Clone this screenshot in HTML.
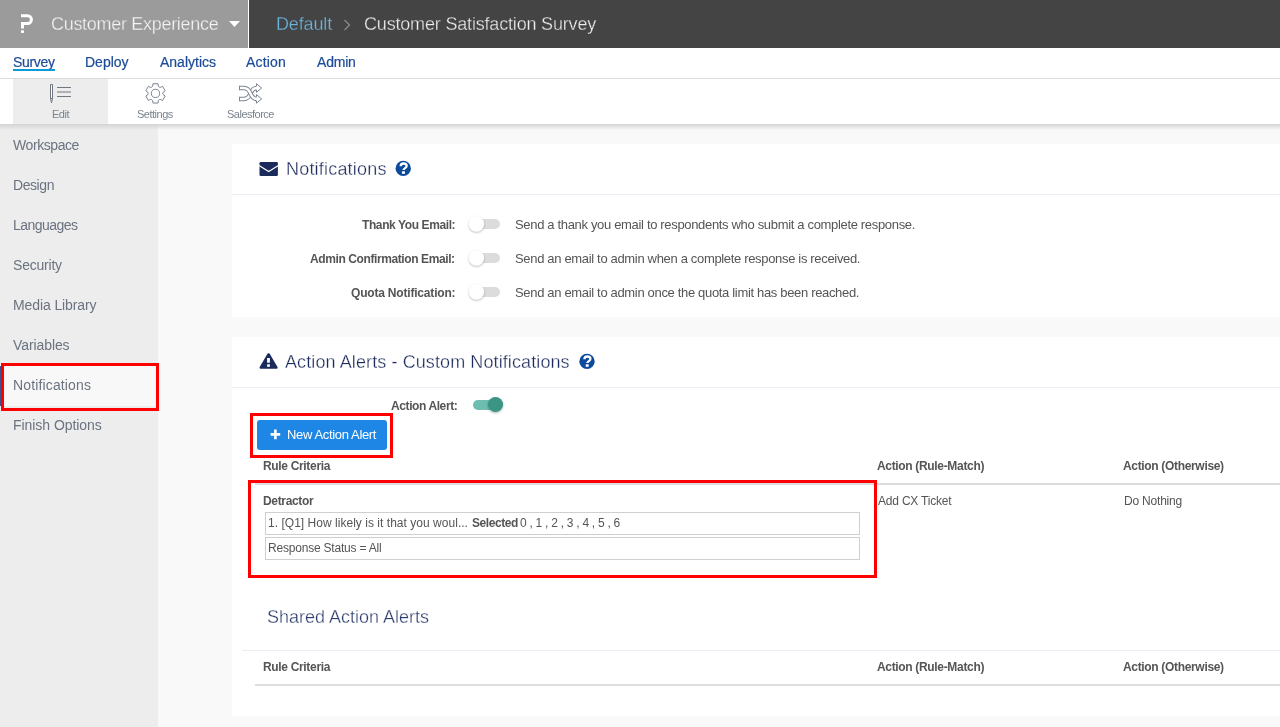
<!DOCTYPE html>
<html><head><meta charset="utf-8">
<style>
*{margin:0;padding:0;box-sizing:border-box}
html,body{width:1280px;height:727px;overflow:hidden;background:#f9f9f9;font-family:"Liberation Sans",sans-serif}
.a{position:absolute;white-space:nowrap;line-height:1;will-change:transform}
#top1{position:absolute;left:0;top:0;width:248px;height:48px;background:#9b9b9b}
#topsep{position:absolute;left:248px;top:0;width:1px;height:48px;background:#fff}
#top2{position:absolute;left:249px;top:0;width:1031px;height:48px;background:#444}
#nav{position:absolute;left:0;top:48px;width:1280px;height:30px;background:#fff}
#navb{position:absolute;left:0;top:78px;width:1280px;height:1px;background:#dcdcdc}
#tb{position:absolute;left:0;top:79px;width:1280px;height:45px;background:#fff}
#tbact{position:absolute;left:13px;top:79px;width:95px;height:45px;background:#ededed}
#shadow{position:absolute;left:0;top:124px;width:1280px;height:6px;background:linear-gradient(#d4d4d4,rgba(248,248,248,0))}
#side{position:absolute;left:0;top:124px;width:158px;height:603px;background:#ededed}
.nav{font-size:14px;color:#1c4b98;top:55px;-webkit-text-stroke:0.2px #1c4b98}
.tbl{font-size:11px;color:#7a838e;top:109px;letter-spacing:-0.5px}
.si{font-size:14px;color:#6b7380;left:13px;letter-spacing:-0.35px}
.panel{position:absolute;left:232px;width:1048px;background:#fff}
.h{font-size:18px;color:#1b2a5c;-webkit-text-stroke:0.3px #fff}
.lbl{font-size:12px;font-weight:bold;color:#555;letter-spacing:-0.4px;text-align:right}
.desc{font-size:13px;color:#555;letter-spacing:-0.33px;left:515px}
.th{font-size:12px;font-weight:bold;color:#555;letter-spacing:-0.33px}
.td{font-size:12px;color:#555;letter-spacing:-0.2px}
.red{position:absolute;border:3px solid #ff0000}
.tog{position:absolute;width:32px;height:16px}
.tog .tr{position:absolute;left:2px;top:3px;width:30px;height:10px;border-radius:5px;background:#dcdcdc}
.tog .kn{position:absolute;left:0;top:0;width:16px;height:16px;border-radius:50%;background:#fff;box-shadow:0 1px 3px rgba(0,0,0,.35)}
</style></head><body>
<div id="top1"></div><div id="topsep"></div><div id="top2"></div>
<div id="nav"></div><div id="navb"></div>
<div id="tb"></div><div id="tbact"></div>
<div id="side"></div>
<div id="shadow"></div>

<!-- header -->
<svg class="a" style="left:0;top:0" width="48" height="48"><path d="M21 14.2H27.5A5.4 5.4 0 0 1 27.5 25H24V28.6H21V22.1H27.5A2.45 2.45 0 0 0 27.5 17.2H21Z" fill="#fff"/><rect x="21" y="30.2" width="3" height="2.8" rx="0.7" fill="#fff"/></svg>
<div class="a" style="left:51px;top:15px;font-size:18px;color:#f4f4f4;letter-spacing:-0.3px;-webkit-text-stroke:0.3px #9b9b9b">Customer Experience</div>
<svg class="a" style="left:229px;top:21px" width="11" height="6"><path d="M0 0H11L5.5 6Z" fill="#fff"/></svg>
<div class="a" style="left:276px;top:15px;font-size:18px;color:#6cb6dc;letter-spacing:-0.15px;-webkit-text-stroke:0.3px #444">Default</div>
<svg class="a" style="left:343px;top:19px" width="8" height="12"><path d="M1.5 1L6.5 6L1.5 11" stroke="#8a8a8a" stroke-width="1.3" fill="none"/></svg>
<div class="a" style="left:364px;top:15px;font-size:18px;color:#eeeeee;letter-spacing:-0.18px;-webkit-text-stroke:0.3px #444">Customer Satisfaction Survey</div>

<!-- nav -->
<div class="a nav" style="left:13px;letter-spacing:-0.33px">Survey</div>
<div class="a" style="left:13px;top:69px;width:42px;height:2px;background:#0b9bd9"></div>
<div class="a nav" style="left:85px">Deploy</div>
<div class="a nav" style="left:160px">Analytics</div>
<div class="a nav" style="left:246px;letter-spacing:0.17px">Action</div>
<div class="a nav" style="left:317px;letter-spacing:-0.2px">Admin</div>

<!-- toolbar -->
<div class="a tbl" style="left:52px">Edit</div>
<div class="a tbl" style="left:137px">Settings</div>
<div class="a tbl" style="left:227px">Salesforce</div>

<!-- sidebar -->
<div class="a" style="left:0;top:365px;width:158px;height:41px;background:#f8f8f8"></div>
<div class="a" style="left:0;top:366px;width:1px;height:40px;background:#474d86"></div>
<div class="a si" style="top:138px;letter-spacing:-0.42px">Workspace</div>
<div class="a si" style="top:178px;letter-spacing:-0.43px">Design</div>
<div class="a si" style="top:218px;letter-spacing:-0.53px">Languages</div>
<div class="a si" style="top:258px;letter-spacing:-0.21px">Security</div>
<div class="a si" style="top:298px;letter-spacing:-0.1px">Media Library</div>
<div class="a si" style="top:338px;letter-spacing:-0.09px">Variables</div>
<div class="a si" style="top:378px;letter-spacing:0.14px">Notifications</div>
<div class="a si" style="top:418px;letter-spacing:-0.05px">Finish Options</div>
<div class="red" style="left:1px;top:363px;width:158px;height:48px"></div>

<!-- panel 1 -->
<div class="panel" style="top:144px;height:173px"></div>
<div class="a" style="left:232px;top:194px;width:1048px;height:1px;background:#eceef5"></div>
<div class="a h" style="left:286px;top:160px;letter-spacing:0.2px">Notifications</div>

<div class="a lbl" style="right:825px;top:219px">Thank You Email:</div>
<div class="a lbl" style="right:825px;top:253px">Admin Confirmation Email:</div>
<div class="a lbl" style="right:825px;top:287px;letter-spacing:-0.19px">Quota Notification:</div>
<div class="a desc" style="top:218px">Send a thank you email to respondents who submit a complete response.</div>
<div class="a desc" style="top:252px">Send an email to admin when a complete response is received.</div>
<div class="a desc" style="top:286px">Send an email to admin once the quota limit has been reached.</div>

<!-- panel 2 -->
<div class="panel" style="top:337px;height:379px"></div>
<div class="a" style="left:232px;top:387px;width:1048px;height:1px;background:#eceef5"></div>
<div class="a h" style="left:285px;top:353px;letter-spacing:0.1px">Action Alerts - Custom Notifications</div>
<div class="a lbl" style="left:391px;top:400px">Action Alert:</div>
<div class="a" style="left:257px;top:420px;width:130px;height:30px;background:#1e87e5;border-radius:3px"></div>
<div class="a" style="left:287px;top:428px;font-size:13px;color:#fff;letter-spacing:-0.35px">New Action Alert</div>
<div class="red" style="left:250px;top:413px;width:143px;height:45px"></div>

<div class="a th" style="left:263px;top:460px">Rule Criteria</div>
<div class="a th" style="left:877px;top:460px">Action (Rule-Match)</div>
<div class="a th" style="left:1123px;top:460px">Action (Otherwise)</div>
<div class="a" style="left:255px;top:483px;width:1025px;height:2px;background:#dddddd"></div>
<div class="a th" style="left:263px;top:495px">Detractor</div>
<div class="a td" style="left:878px;top:495px">Add CX Ticket</div>
<div class="a td" style="left:1124px;top:495px">Do Nothing</div>
<div class="a" style="left:265px;top:512px;width:595px;height:23px;border:1px solid #cfcfcf"></div>
<div class="a" style="left:265px;top:537px;width:595px;height:23px;border:1px solid #cfcfcf"></div>
<div class="a td" style="left:268px;top:517px;letter-spacing:0.03px">1. [Q1] How likely is it that you woul...</div>
<div class="a td" style="left:472px;top:517px;letter-spacing:-0.42px;font-weight:bold">Selected</div>
<div class="a td" style="left:520px;top:517px;letter-spacing:-0.27px">0 , 1 , 2 , 3 , 4 , 5 , 6</div>
<div class="a td" style="left:268px;top:542px">Response Status = All</div>
<div class="red" style="left:248px;top:480px;width:629px;height:98px"></div>

<div class="a h" style="left:267px;top:608px;color:#2b3a6c">Shared Action Alerts</div>
<div class="a" style="left:242px;top:650px;width:1038px;height:1px;background:#eceef5"></div>
<div class="a th" style="left:263px;top:661px">Rule Criteria</div>
<div class="a th" style="left:877px;top:661px">Action (Rule-Match)</div>
<div class="a th" style="left:1123px;top:661px">Action (Otherwise)</div>
<div class="a" style="left:255px;top:684px;width:1025px;height:2px;background:#dddddd"></div>


<!-- icons -->
<svg class="a" style="left:0;top:0;overflow:visible" width="1280" height="727">
 <!-- pencil -->
 <g fill="none" stroke="#6f7782" stroke-width="1">
  <path d="M50.5 84.5H52.5V98.5L51.5 102.8L50.5 98.5Z" fill="#fff"/>
  <path d="M50.5 98.5H52.5"/>
  <path d="M57 87.5H71M57 92H71M57 96.5H71"/>
 </g>
 <!-- gear -->
 <path d="M152.65 86.35L152.91 83.74L158.09 83.74L158.35 86.35A3.0 3.0 0 0 0 160.18 87.41L162.57 86.33L165.16 90.81L163.03 92.34A3.0 3.0 0 0 0 163.03 94.46L165.16 95.99L162.57 100.47L160.18 99.39A3.0 3.0 0 0 0 158.35 100.45L158.09 103.06L152.91 103.06L152.65 100.45A3.0 3.0 0 0 0 150.82 99.39L148.43 100.47L145.84 95.99L147.97 94.46A3.0 3.0 0 0 0 147.97 92.34L145.84 90.81L148.43 86.33L150.82 87.41A3.0 3.0 0 0 0 152.65 86.35 Z" fill="none" stroke="#7d8590" stroke-width="1"/>
 <circle cx="155.5" cy="93.4" r="4.1" fill="none" stroke="#7d8590" stroke-width="1"/>
 <!-- shuffle -->
 <g fill="none" stroke-linecap="butt">
  <path d="M239.5 99H244C248 99 249.5 96 250.5 93.5C251.5 91 253 88 257 88" stroke="#7d8590" stroke-width="4.4"/>
  <path d="M239.5 99H244C248 99 249.5 96 250.5 93.5C251.5 91 253 88 257 88" stroke="#fff" stroke-width="2.4"/>
  <path d="M239.5 88H244C248 88 249.5 91 250.5 93.5C251.5 96 253 99 257 99" stroke="#7d8590" stroke-width="4.4"/>
  <path d="M239.5 88H244C248 88 249.5 91 250.5 93.5C251.5 96 253 99 257 99" stroke="#fff" stroke-width="2.4"/>
  <path d="M239.5 85.8V90.2M239.5 96.8V101.2" stroke="#7d8590" stroke-width="1"/>
  <path d="M256.5 83.7L261.6 88L256.5 92.3Z" fill="#fff"/>
  <path d="M256.5 86V83.7L261.6 88L256.5 92.3V90" stroke="#7d8590" stroke-width="1"/>
  <path d="M256.5 94.6L261.6 98.9L256.5 103.2Z" fill="#fff"/>
  <path d="M256.5 96.8V94.6L261.6 98.9L256.5 103.2V101" stroke="#7d8590" stroke-width="1"/>
 </g>
 <!-- envelope -->
 <rect x="259.5" y="162" width="18.4" height="14" rx="1.3" fill="#1a2a5a"/>
 <path d="M259 165.5L268.7 171.6L278.4 165.5" fill="none" stroke="#fff" stroke-width="1.2"/>
 <!-- question 1 -->
 <g transform="translate(403.25 168.4)">
  <circle r="7.7" fill="#0b4a9c"/>
  <path d="M-2.6 -2.2C-2.6 -4 -1.3 -4.9 0.3 -4.9C2.2 -4.9 3.4 -3.8 3.4 -2.3C3.4 -0.3 0.3 -0.3 0.3 1.7" fill="none" stroke="#fff" stroke-width="2.3"/>
  <rect x="-1.3" y="2.9" width="3" height="2.5" fill="#fff"/>
 </g>
 <!-- warning -->
 <path d="M268.6 353.3C269.3 353.3 269.7 353.8 270 354.3L277.5 367C277.9 367.8 277.5 368.7 276.6 368.7H260.6C259.7 368.7 259.3 367.8 259.7 367L267.2 354.3C267.5 353.8 267.9 353.3 268.6 353.3Z" fill="#1a2a5a"/>
 <rect x="267.1" y="358" width="2.8" height="4.7" fill="#fff"/>
 <rect x="267.1" y="364.3" width="2.8" height="2.5" fill="#fff"/>
 <!-- question 2 -->
 <g transform="translate(587 361.4)">
  <circle r="7.7" fill="#0b4a9c"/>
  <path d="M-2.6 -2.2C-2.6 -4 -1.3 -4.9 0.3 -4.9C2.2 -4.9 3.4 -3.8 3.4 -2.3C3.4 -0.3 0.3 -0.3 0.3 1.7" fill="none" stroke="#fff" stroke-width="2.3"/>
  <rect x="-1.3" y="2.9" width="3" height="2.5" fill="#fff"/>
 </g>
 <!-- plus -->
 <path d="M275.4 429.6V439.2M270.6 434.4H280.2" stroke="#fff" stroke-width="2.6"/>
 <!-- toggles -->
 <defs><filter id="sh" x="-50%" y="-50%" width="200%" height="200%"><feDropShadow dx="0" dy="1" stdDeviation="1" flood-color="#000" flood-opacity="0.3"/></filter></defs>
 <rect x="472" y="219" width="28" height="10" rx="5" fill="#dcdcdc"/>
 <circle cx="476.5" cy="223.8" r="7.6" fill="#fff" filter="url(#sh)"/>
 <rect x="472" y="253" width="28" height="10" rx="5" fill="#dcdcdc"/>
 <circle cx="476.5" cy="257.8" r="7.6" fill="#fff" filter="url(#sh)"/>
 <rect x="472" y="287" width="28" height="10" rx="5" fill="#dcdcdc"/>
 <circle cx="476.5" cy="291.8" r="7.6" fill="#fff" filter="url(#sh)"/>
 <rect x="473" y="400" width="27" height="10" rx="5" fill="#6dbdb1"/>
 <circle cx="495.5" cy="404.5" r="7.6" fill="#3b9585" filter="url(#sh)"/>
</svg>
</body></html>
